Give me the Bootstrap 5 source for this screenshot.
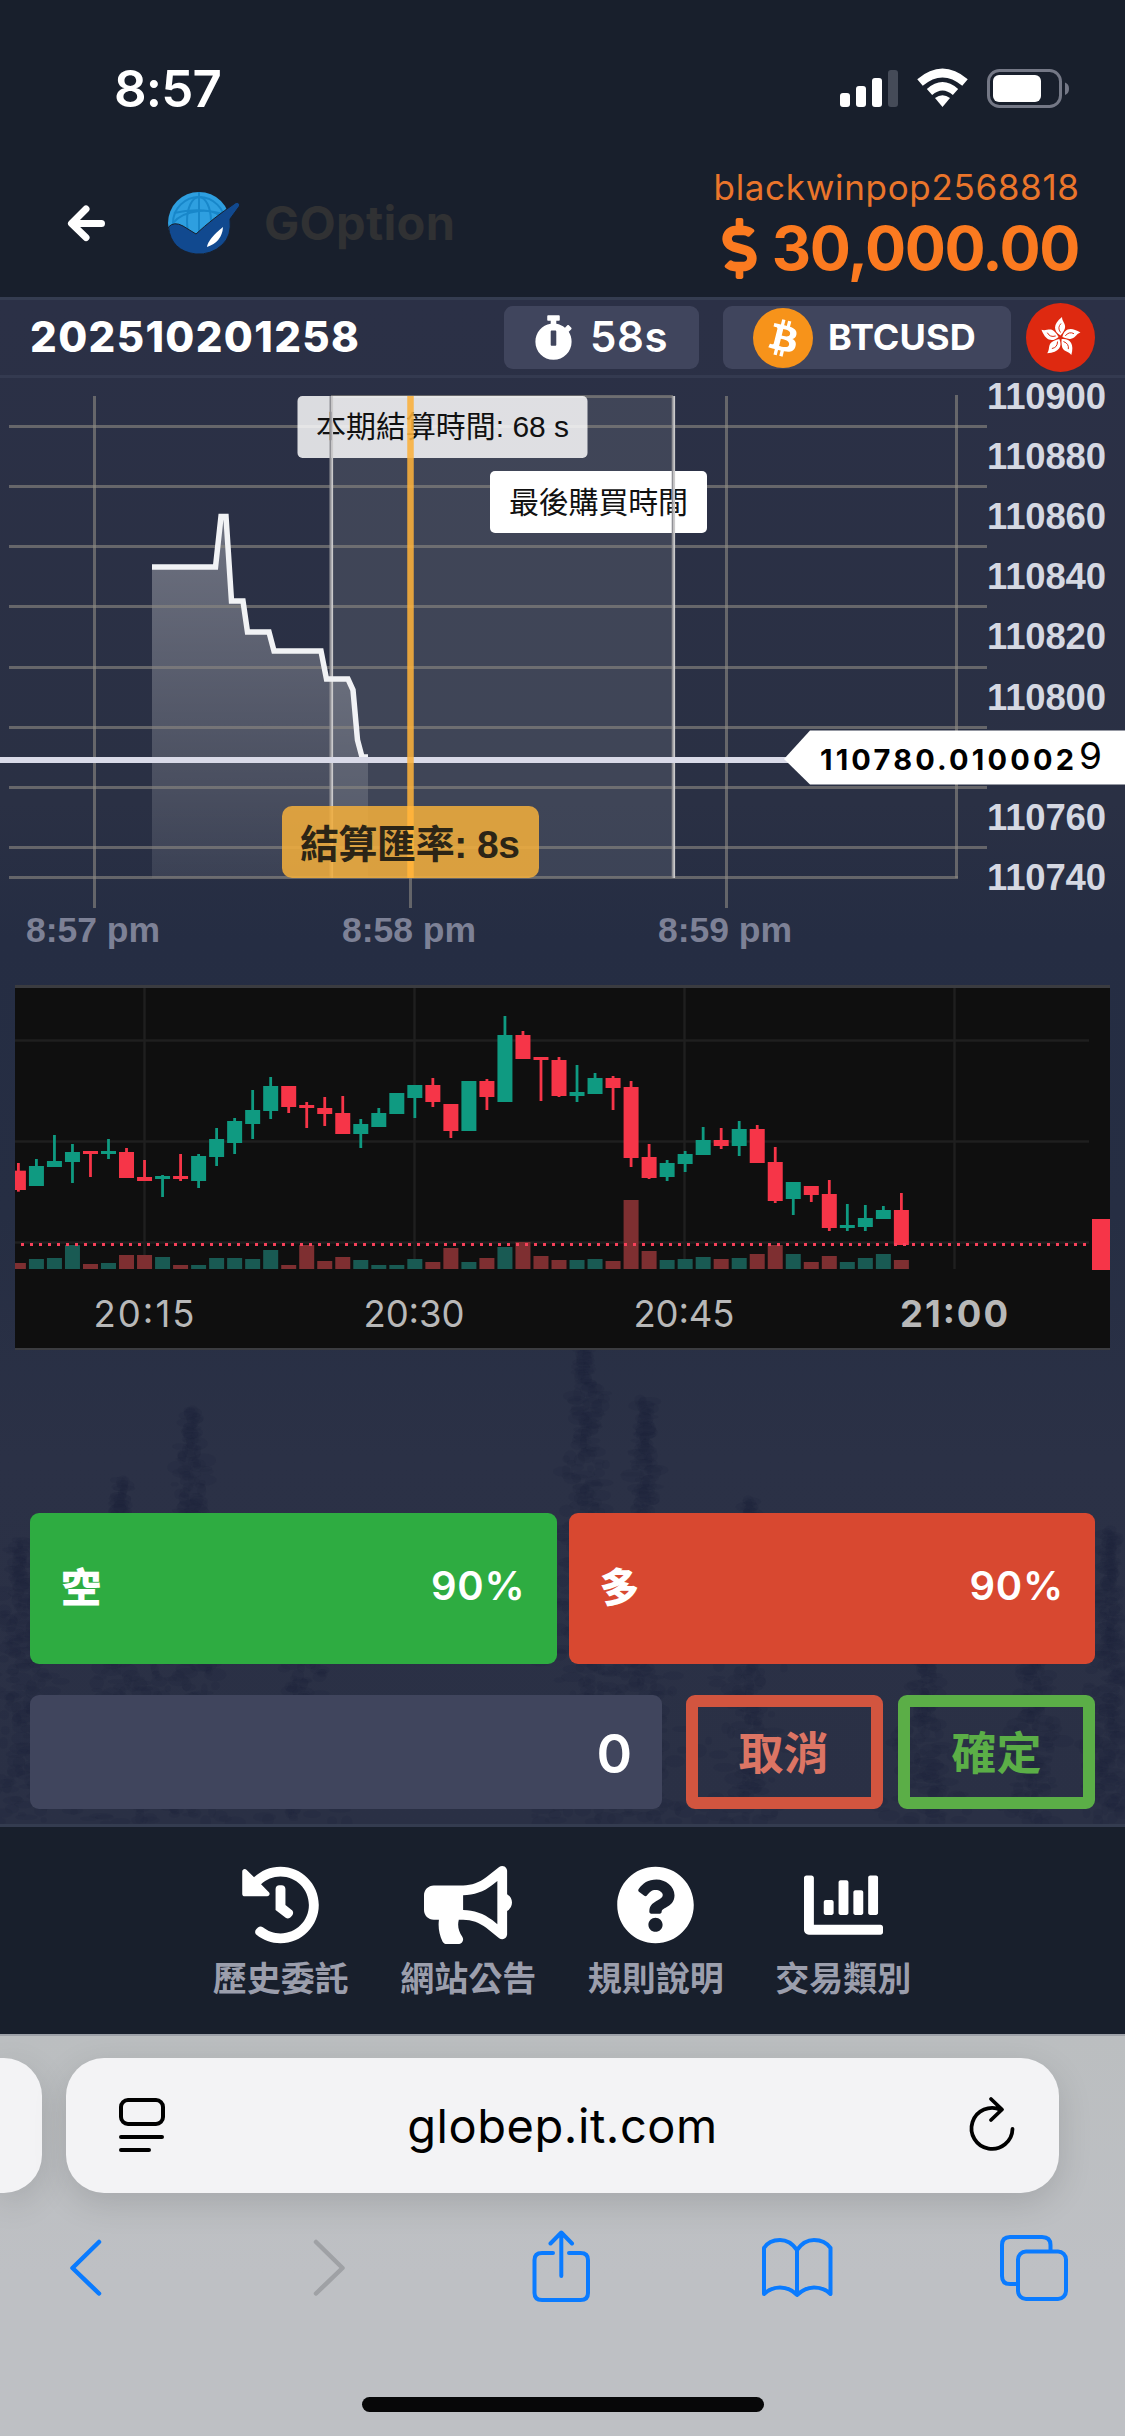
<!DOCTYPE html>
<html lang="zh-Hant">
<head>
<meta charset="utf-8">
<meta name="viewport" content="width=device-width, initial-scale=1">
<title>GOption</title>
<link href="https://cdn.jsdelivr.net/npm/bootstrap@5.3.0/dist/css/bootstrap.min.css" rel="stylesheet">
<style>
  :root { --ink:#181f2c; --slate:#2b3145; --chip:#40455d; --rule:#343c50; --brand:#fb7a20; --ios:#bec0c4; --blue:#0a7bff; }
  body { width:1125px; height:2436px; background:var(--ink); color:#fff; overflow:hidden;
         font-family:Inter,"Noto Sans CJK TC",sans-serif; line-height:1; }
  svg { display:block; flex:none; overflow:visible; }
  .status-bar { height:142px; padding:0 56px 0 114px; }
  .clock { font-size:51px; font-weight:600; letter-spacing:-.8px; margin-top:34px; }
  .status-icons { margin-top:36px; }
  .site-head { height:155px; padding:0 46px 0 67px; }
  .brand-row { padding-top:6px; }
  .logo { margin-left:62px; }
  .brand-name { font-size:47px; font-weight:700; color:#303133; letter-spacing:.3px; margin-left:23px; }
  .user-name { font-size:35px; color:#ea752b; letter-spacing:.68px; margin-right:-.7px; }
  .balance { font-size:61px; font-weight:700; color:var(--brand); letter-spacing:-1.4px; gap:15px; margin-top:13px; }
  .stage { height:1530px; background:var(--slate); border-top:3px solid var(--rule); border-bottom:3px solid var(--rule); isolation:isolate; }
  .scenery { position:absolute; left:0; top:0; z-index:-1; overflow:hidden; }
  .round-bar { height:78px; padding:0 30px; border-bottom:3px solid #343a50; }
  .round-no { font-size:42px; font-weight:800; letter-spacing:1.35px; width:474px; padding-bottom:2px; }
  .chip { height:63px; border-radius:9px; background:var(--chip); font-weight:700; }
  .chip-time { width:195px; padding-left:30px; gap:17px; font-size:42px; font-weight:600; letter-spacing:.6px; margin-right:24px; }
  .chip-pair { width:288px; padding-left:30px; gap:15px; font-size:36px; letter-spacing:.1px; margin-right:15px; }
  .chip span { padding-bottom:2px; }
  .quote-panel { margin:0 15px; }
  .trade { padding:163px 30px 0; }
  .trade-gap { gap:12px; }
  .order-row { margin-top:31px; }
  .side { height:151px; border:0; border-radius:9px; padding:0 31px 5px; font-size:40px; font-weight:600; letter-spacing:.8px; color:#fff; }
  .side .zh { font-weight:800; padding-top:3px; letter-spacing:0; }
  .side-short { background:#2eac41; } .side-long { background:#d84830; }
  .amount { width:632px; height:114px; border-radius:9px; background:var(--chip); font-size:54px; font-weight:600; padding:3px 30px 0; }
  .act { width:197px; height:114px; border:12px solid; border-radius:9px; font-size:45px; font-weight:700; padding:3px 0 0; color:#dc7564; border-color:#d2553f; margin-left:15px; }
  .act-cancel { margin-left:24px; padding-right:2px; }
  .act-ok { color:#5bae47; border-color:#5bae47; }
  .foot-nav { height:207px; padding:37px 187px 0; }
  .foot-nav a { width:187.5px; color:#9b9eac; font-size:34px; font-weight:700; text-decoration:none; }
  .foot-nav svg { height:82px; fill:#fff; margin-bottom:16px; }
  .browser { height:402px; background:linear-gradient(#bbbec0,var(--ios) 60%); border-top:2px solid #9da1a8; color:#000; }
  .addr-row { height:157px; padding-top:22px; }
  .addr { width:993px; height:135px; border-radius:38px; background:#f3f3f5; box-shadow:0 10px 34px rgba(0,0,0,.13); padding:0 44px 0 53px; font-size:47px; letter-spacing:.55px; }
  .addr span { margin-right:9px; }
  .prev-tab { width:42px; height:135px; border-radius:0 38px 38px 0; background:#f3f3f5; box-shadow:0 10px 34px rgba(0,0,0,.13); margin-right:24px; }
  .tools { height:152px; padding:0 57px 4px 69px; }
  .home-bar { width:402px; height:15px; border-radius:8px; background:#070708; margin-top:52px; }
</style>
</head>
<body>

<header class="status-bar d-flex justify-content-between align-items-center">
  <div class="clock">8:57</div>
  <svg class="status-icons" width="229" height="40" viewBox="840 69 229 40">
    <g fill="#fff"><rect x="840" y="93" width="10" height="14" rx="3"/><rect x="856" y="86" width="10" height="21" rx="3"/><rect x="872" y="78" width="10" height="29" rx="3"/></g>
    <rect x="888" y="70" width="10" height="37" rx="3" fill="#454b58"/>
    <g fill="none" stroke="#fff"><path d="M920 82.5Q942.500 63.500 965 82.500" stroke-width="8.500"/><path d="M929.500 92Q942.500 80.500 955.500 92" stroke-width="8"/></g>
    <path d="M935 98Q942.500 92.500 950 98L942.500 107Z" fill="#fff"/>
    <rect x="988.500" y="70.500" width="72" height="36" rx="11" fill="none" stroke="#747886" stroke-width="3"/>
    <rect x="993" y="75" width="48" height="27" rx="6" fill="#fff"/>
    <path d="M1065 82.500Q1069 84 1069 88.700T1065 95Z" fill="#747886"/>
  </svg>
</header>

<nav class="site-head d-flex justify-content-between">
  <div class="brand-row d-flex align-items-center">
    <svg width="38" height="38" viewBox="67 204 38 38" fill="none" stroke="#fff" stroke-width="7" stroke-linecap="round" stroke-linejoin="round"><path d="M86 209L71.500 223.500L86 237.500M73 223.500H101.500"/></svg>
    <svg class="logo" width="74" height="64" viewBox="167 192 74 64">
      <circle cx="199" cy="224" r="31" fill="#2e9fe0"/>
      <g fill="none" stroke="#1887ca" stroke-width="2"><circle cx="199" cy="224" r="26"/><ellipse cx="199" cy="222" rx="12" ry="24"/><path d="M174 214Q199 208 223 215M199 193V238M173 224Q181 214 199 212T225 222"/></g>
      <path d="M168.500 228Q174 222 183 227L196 235Q212 220 236 203.500Q240 203 239.500 207L230 220Q232 237 222 246Q211 256 196 255Q171 252 168.500 228Z" fill="#11498f" stroke="#181f2c" stroke-width="1"/>
      <path d="M207 248Q208 240 223 228Q222 243 207 248Z" fill="#fff"/>
    </svg>
    <span class="brand-name">GOption</span>
  </div>
  <div class="d-flex flex-column align-items-end pt-4">
    <span class="user-name mt-1">blackwinpop2568818</span>
    <div class="balance d-flex align-items-center">
      <svg width="35" height="61" viewBox="0 0 288 512" fill="currentColor"><path d="M209.200 233.400l-108-31.600C88.700 198.200 80 186.500 80 173.500c0-16.300 13.200-29.500 29.500-29.500h66.300c12.200 0 24.200 3.700 34.200 10.500 6.100 4.100 14.300 3.100 19.500-2l34.800-34c7.100-6.900 6.100-18.400-1.800-24.500C238 74.800 207.400 64.100 176 64V16c0-8.800-7.200-16-16-16h-32c-8.800 0-16 7.200-16 16v48h-2.500C45.800 64-5.400 118.700.5 183.600c4.200 46.100 39.400 83.600 83.800 96.600l102.500 30c12.500 3.700 21.200 15.300 21.200 28.300 0 16.300-13.200 29.500-29.500 29.500h-66.300C100 368 88 364.300 78 357.500c-6.100-4.100-14.300-3.100-19.500 2l-34.800 34c-7.100 6.900-6.100 18.400 1.800 24.500 24.500 19.200 55.100 29.900 86.500 30v48c0 8.800 7.200 16 16 16h32c8.800 0 16-7.200 16-16v-48.200c46.600-.9 90.300-28.600 105.700-72.700 21.500-61.600-14.600-124.800-72.500-141.700z"/></svg>
      <span>30,000.00</span>
    </div>
  </div>
</nav>

<main class="stage position-relative">
  <svg class="scenery" width="1125" height="1524" viewBox="0 300 1125 1524">
    <defs><linearGradient id="sky" x2="0" y2="1"><stop offset="0" stop-color="#2b3046"/><stop offset=".33" stop-color="#2a3044"/><stop offset=".42" stop-color="#252d43"/><stop offset=".6" stop-color="#262e43"/><stop offset=".76" stop-color="#2b3146"/><stop offset="1" stop-color="#2a3045"/></linearGradient></defs>
    <rect y="300" width="1125" height="1524" fill="url(#sky)"/>
    <g id="trees" fill="#20263c"></g>
  </svg>

  <section class="round-bar d-flex align-items-center">
    <div class="round-no">202510201258</div>
    <div class="chip chip-time d-flex align-items-center">
      <svg width="39" height="45" viewBox="0 0 448 512" fill="#fff"><path d="M432 304c0 114.900-93.100 208-208 208S16 418.900 16 304c0-104 76.300-190.200 176-205.500V64h-28c-6.600 0-12-5.400-12-12V12c0-6.600 5.400-12 12-12h120c6.600 0 12 5.400 12 12v40c0 6.600-5.400 12-12 12h-28v34.500c37.500 5.800 71.700 21.600 99.700 44.600l27.500-27.500c4.700-4.700 12.300-4.700 17 0l28.300 28.300c4.700 4.700 4.700 12.300 0 17l-29.400 29.400-.6.6C419.700 223.300 432 262.200 432 304zm-176 36V188.500c0-6.600-5.400-12-12-12h-40c-6.600 0-12 5.400-12 12V340c0 6.600 5.400 12 12 12h40c6.600 0 12-5.400 12-12z"/></svg>
      <span>58s</span>
    </div>
    <div class="chip chip-pair d-flex align-items-center">
      <svg width="60" height="60" viewBox="0 0 32 32"><circle cx="16" cy="16" r="16" fill="#f7931a"/><path fill="#fff" d="M23.189 14.020c.314-2.096-1.283-3.223-3.465-3.975l.708-2.840-1.728-.430-.690 2.765c-.454-.114-.920-.220-1.385-.326l.695-2.783L15.596 6l-.708 2.839c-.376-.086-.746-.170-1.104-.260l.002-.009-2.384-.595-.460 1.846s1.283.294 1.256.312c.700.175.826.638.805 1.006l-.806 3.235c.048.012.110.030.180.057l-.183-.045-1.130 4.532c-.086.212-.303.531-.793.410.018.025-1.256-.313-1.256-.313l-.858 1.978 2.250.561c.418.105.828.215 1.231.318l-.715 2.872 1.727.430.708-2.840c.472.127.930.245 1.378.357l-.706 2.828 1.728.430.715-2.866c2.948.558 5.164.333 6.097-2.333.752-2.146-.037-3.385-1.588-4.192 1.130-.260 1.980-1.003 2.207-2.538zm-3.950 5.538c-.533 2.147-4.148.986-5.320.695l.950-3.805c1.172.293 4.929.872 4.370 3.110zm.535-5.569c-.487 1.953-3.495.960-4.470.717l.860-3.450c.975.243 4.118.696 3.610 2.733z"/></svg>
      <span>BTCUSD</span>
    </div>
    <svg width="69" height="69" viewBox="-34.500 -34.500 69 69">
      <circle r="34.500" fill="#de2910"/>
      <defs><g id="petal"><path d="M0-2C-7-6-8-13 1.500-20.500C1.500-15 7-13 3.500-7Q2-4 0-2Z" fill="#fff"/><path d="M0-5Q-3.500-10 .5-14" fill="none" stroke="#de2910" stroke-width=".9"/></g></defs>
      <use href="#petal"/><use href="#petal" transform="rotate(72)"/><use href="#petal" transform="rotate(144)"/><use href="#petal" transform="rotate(216)"/><use href="#petal" transform="rotate(288)"/>
    </svg>
  </section>

  <section>
    <svg width="1125" height="607" viewBox="0 378 1125 607">
      <defs><linearGradient id="area" x2="0" y2="1"><stop offset="0" stop-color="#fff" stop-opacity=".32"/><stop offset="1" stop-color="#fff" stop-opacity=".09"/></linearGradient></defs>
      <rect x="331" y="396" width="342" height="482" fill="#fff" fill-opacity=".1"/>
      <path d="M152 567H215.500L221 516.500H226L231.500 601H243L247.500 632H269L274 651H321L326.500 679H348L353 690L357.500 740L362 757H368V878H152Z" fill="url(#area)"/>
      <g stroke="#8a8781" stroke-opacity=".62" stroke-width="3" fill="none">
        <path d="M9 426.500H987M9 486.500H987M9 546.500H987M9 606.500H987M9 667.500H987M9 727.500H987M9 787.500H987M9 847.500H987M9 877.500H958M331 396.500H673"/>
        <path d="M94.500 396V908M410.500 878V908M726.500 396V908M956.500 395V878"/>
      </g>
      <rect x="490" y="471" width="217" height="62" rx="5" fill="#fff"/>
      <text x="509" y="513" font-size="30" textLength="179" fill="#111">最後購買時間</text>
      <rect x="297.500" y="396" width="290" height="62" rx="5" fill="#fff" fill-opacity=".83"/>
      <text x="316" y="437" font-size="30" textLength="253" fill="#111" font-family="'Liberation Sans','Noto Sans CJK TC',sans-serif">本期結算時間: 68 s</text>
      <path d="M330.500 396V878M672.700 396V878" stroke="#909095" stroke-width="2"/>
      <path d="M332.200 396V878M674.200 396V878" stroke="#cbcacb" stroke-width="1.800"/>
      <path d="M152 567H215.500L221 516.500H226L231.500 601H243L247.500 632H269L274 651H321L326.500 679H348L353 690L357.500 740L362 757H368" fill="none" stroke="#f1f2f5" stroke-width="5.500"/>
      <path d="M0 760H800" stroke="#d9dae8" stroke-width="6"/>
      <path d="M410.500 396V878" stroke="#fbb03b" stroke-opacity=".88" stroke-width="6.500"/>
      <rect x="282" y="806" width="257" height="72" rx="10" fill="#f1ae3c" fill-opacity=".87"/>
      <path d="M410.500 806V878" stroke="#feb23b" stroke-width="6"/>
      <text x="300" y="858" font-size="39" font-weight="700" textLength="220" fill="#2c2516" font-family="'Liberation Sans','Noto Sans CJK TC',sans-serif">結算匯率: 8s</text>
      <g fill="#d5d8e2" font-family="'Liberation Sans',sans-serif" font-size="36.500" font-weight="700">
        <text x="987" y="408.500" textLength="119">110900</text><text x="987" y="469" textLength="119">110880</text><text x="987" y="529" textLength="119">110860</text><text x="987" y="589" textLength="119">110840</text><text x="987" y="649" textLength="119">110820</text><text x="987" y="710" textLength="119">110800</text><text x="987" y="830" textLength="119">110760</text><text x="987" y="890" textLength="119">110740</text>
      </g>
      <g fill="#7d8196" font-family="'Liberation Sans',sans-serif" font-size="35.500" font-weight="700">
        <text x="26" y="942" textLength="134">8:57 pm</text><text x="342" y="942" textLength="134">8:58 pm</text><text x="658" y="942" textLength="134">8:59 pm</text>
      </g>
      <path d="M784 759L810 730.500H1125V784.500H810Z" fill="#fff"/>
      <text x="820" y="769.500" font-size="29" font-weight="700" fill="#000" textLength="254">110780.010002</text>
      <text x="1079" y="769" font-size="37" fill="#000">9</text>
    </svg>
  </section>

  <section class="quote-panel">
    <svg width="1095" height="365" viewBox="15 985 1095 365">
      <defs><clipPath id="plot"><rect x="15" y="985" width="1095" height="365"/></clipPath></defs>
      <rect x="15" y="985" width="1095" height="365" fill="#0f0f0f"/>
      <path d="M15 986.500H1110" stroke="#3b3c40" stroke-width="3"/><path d="M15 1349H1110" stroke="#3b3c40" stroke-width="2"/>
      <path d="M144.500 988V1269M414.500 988V1269M684.500 988V1269M954.500 988V1269M15 1040.500H1089M15 1141.500H1089M15 1242.500H1089" stroke="#1f1f1f" stroke-width="2.500"/>
      <g id="candles" clip-path="url(#plot)"></g>
      <path d="M21 1244.500H1089" stroke="#f7415a" stroke-width="3" stroke-dasharray="3 6"/>
      <rect x="1092" y="1219" width="18" height="51" fill="#f63548"/>
      <g fill="#b8b8b8" font-size="36.500" text-anchor="middle">
        <text x="144" y="1327" textLength="101">20:15</text><text x="414" y="1327" textLength="101">20:30</text><text x="684" y="1327" textLength="101">20:45</text><text x="954" y="1327" textLength="108" font-weight="700">21:00</text>
      </g>
    </svg>
  </section>

  <section class="trade">
    <div class="trade-gap d-flex">
      <button class="side side-short flex-fill d-flex justify-content-between align-items-center"><span class="zh">空</span><span>90%</span></button>
      <button class="side side-long flex-fill d-flex justify-content-between align-items-center"><span class="zh">多</span><span>90%</span></button>
    </div>
    <div class="order-row d-flex">
      <div class="amount d-flex align-items-center justify-content-end">0</div>
      <button class="act act-cancel bg-transparent">取消</button>
      <button class="act act-ok bg-transparent">確定</button>
    </div>
  </section>
</main>

<nav class="foot-nav d-flex">
  <a class="d-flex flex-column align-items-center" href="#"><svg width="79" viewBox="0 0 512 512"><path d="M504 255.531c.253 136.640-111.180 248.372-247.820 248.468-59.015.042-113.223-20.530-155.822-54.911-11.077-8.940-11.905-25.541-1.839-35.607l11.267-11.267c8.609-8.609 22.353-9.551 31.891-1.984C173.062 425.135 212.781 440 256 440c101.705 0 184-82.311 184-184 0-101.705-82.311-184-184-184-48.814 0-93.149 18.969-126.068 49.932l50.754 50.754c10.080 10.080 2.941 27.314-11.313 27.314H24c-8.837 0-16-7.163-16-16V38.627c0-14.254 17.234-21.393 27.314-11.314l49.372 49.372C129.209 34.136 189.552 8 256 8c136.810 0 247.747 110.780 248 247.531zm-180.912 78.784l9.823-12.630c8.138-10.463 6.253-25.542-4.210-33.679L288 256.349V152c0-13.255-10.745-24-24-24h-16c-13.255 0-24 10.745-24 24v135.651l65.409 50.874c10.463 8.137 25.541 6.253 33.679-4.210z"/></svg>歷史委託</a>
  <a class="d-flex flex-column align-items-center" href="#"><svg width="88" viewBox="0 0 576 512"><path d="M576 240c0-23.630-12.950-44.040-32-55.120V32.010C544 23.260 537.020 0 512 0c-7.120 0-14.190 2.380-19.980 7.020l-85.030 68.030C364.280 109.190 310.660 128 256 128H64c-35.350 0-64 28.650-64 64v96c0 35.350 28.650 64 64 64h33.700c-1.390 10.480-2.180 21.140-2.180 32 0 39.770 9.260 77.350 25.560 110.940 5.190 10.690 16.520 17.060 28.400 17.060h74.280c26.050 0 41.690-29.840 25.900-50.560-16.400-21.520-26.150-48.360-26.150-77.440 0-11.110 1.620-21.790 4.410-32H256c54.660 0 108.280 18.810 150.980 52.950l85.030 68.030a32.023 32.023 0 0 0 19.980 7.020c24.920 0 32-22.780 32-32V295.130C563.050 284.040 576 263.630 576 240zm-96 141.420l-33.050-26.440C392.950 311.780 325.120 288 256 288v-96c69.120 0 136.950-23.780 190.950-66.980L480 98.580v282.840z"/></svg>網站公告</a>
  <a class="d-flex flex-column align-items-center" href="#"><svg width="79" viewBox="0 0 512 512"><path d="M504 256c0 136.997-111.043 248-248 248S8 392.997 8 256C8 119.083 119.043 8 256 8s248 111.083 248 248zM262.655 90c-54.497 0-89.255 22.957-116.549 63.758-3.536 5.286-2.353 12.415 2.715 16.258l34.699 26.310c5.205 3.947 12.621 3.008 16.665-2.122 17.864-22.658 30.113-35.797 57.303-35.797 20.429 0 45.698 13.148 45.698 32.958 0 14.976-12.363 22.667-32.534 33.976C247.128 238.528 216 254.941 216 296v4c0 6.627 5.373 12 12 12h56c6.627 0 12-5.373 12-12v-1.333c0-28.462 83.186-29.647 83.186-106.667 0-58.002-60.165-102-116.531-102zM256 338c-25.365 0-46 20.635-46 46 0 25.364 20.635 46 46 46s46-20.636 46-46c0-25.365-20.635-46-46-46z"/></svg>規則說明</a>
  <a class="d-flex flex-column align-items-center" href="#"><svg width="79" viewBox="0 0 512 512"><path d="M332.800 320h38.400c6.400 0 12.800-6.400 12.800-12.800V172.800c0-6.400-6.400-12.800-12.800-12.800h-38.400c-6.400 0-12.800 6.400-12.800 12.800v134.400c0 6.400 6.400 12.800 12.800 12.800zm96 0h38.400c6.400 0 12.800-6.400 12.800-12.800V76.800c0-6.400-6.400-12.800-12.800-12.800h-38.400c-6.400 0-12.800 6.400-12.800 12.800v230.400c0 6.400 6.400 12.800 12.800 12.800zm-288 0h38.400c6.400 0 12.800-6.400 12.800-12.800v-70.400c0-6.400-6.400-12.800-12.800-12.800h-38.400c-6.400 0-12.800 6.400-12.800 12.800v70.400c0 6.400 6.400 12.800 12.800 12.800zm96 0h38.400c6.400 0 12.800-6.400 12.800-12.800V108.800c0-6.400-6.400-12.800-12.800-12.800h-38.400c-6.400 0-12.800 6.400-12.800 12.800v198.400c0 6.400 6.400 12.800 12.800 12.800zM496 384H64V80c0-8.840-7.160-16-16-16H16C7.160 64 0 71.160 0 80v336c0 17.670 14.330 32 32 32h464c8.840 0 16-7.160 16-16v-32c0-8.840-7.160-16-16-16z"/></svg>交易類別</a>
</nav>

<footer class="browser">
  <div class="addr-row d-flex">
    <div class="prev-tab"></div>
    <div class="addr d-flex align-items-center justify-content-between">
      <svg width="46" height="55" viewBox="119 2099 46 55" fill="none" stroke="#000" stroke-width="4" stroke-linecap="round"><rect x="121" y="2101" width="42" height="24" rx="7"/><path d="M121 2138H162M121 2151H149"/></svg>
      <span>globep.it.com</span>
      <svg width="46" height="56" viewBox="970 2097 46 56" fill="none" stroke="#000" stroke-width="3.800" stroke-linecap="round" stroke-linejoin="round"><path d="M1013.500 2128A20.500 20.500 0 1 1 1002 2109M992 2098L1003 2108.500L992 2119"/></svg>
    </div>
  </div>
  <div class="tools d-flex align-items-center justify-content-between">
    <svg width="999" height="75" viewBox="70 2230 999 75" fill="none" stroke="#0a7bff" stroke-width="4" stroke-linecap="round" stroke-linejoin="round">
      <path d="M100 2242L73.500 2268L100 2293.500" stroke-width="4.500"/>
      <path d="M317 2242L343.500 2268L317 2293.500" stroke="#9fa1a5" stroke-width="4.500"/>
      <path d="M554 2253H543Q535.500 2253 535.500 2260V2293Q535.500 2300 543 2300H581.500Q589 2300 589 2293V2260Q589 2253 581.500 2253H570M562.300 2276V2233M551.500 2243.500L562.300 2232.500L573 2243.500"/>
      <path d="M798 2250Q791 2240 781 2240Q770 2240 765 2248V2294Q772 2287.500 781 2287.500Q791 2287.500 798 2295Q806 2287.500 815 2287.500Q825 2287.500 831.500 2294V2248Q826 2240 815 2240Q805 2240 798 2250V2294"/>
      <rect x="1019" y="2251.500" width="48" height="47.500" rx="8"/>
      <path d="M1017 2284H1011Q1003 2284 1003 2276V2245Q1003 2237 1011 2237H1043Q1051.500 2237 1051.500 2245V2250"/>
    </svg>
  </div>
  <div class="home-bar mx-auto"></div>
</footer>

<script src="https://cdn.jsdelivr.net/npm/bootstrap@5.3.0/dist/js/bootstrap.bundle.min.js"></script>
<script>
  // One-minute candles: direction, high, body top, body bottom, low, volume top (third-pixel units from y = 970)
  const bars = `r579,602,660,665,879 g567,588,648,648,867 g495,573,591,591,864 g522,546,576,639,825 r543,543,552,621,882
  g507,543,552,567,879 r534,546,624,624,855 r570,621,633,633,855 g615,618,627,681,861 r552,618,627,633,885
  g552,558,633,654,885 g474,507,561,588,864 g444,453,519,552,864 g360,420,462,507,867 g321,348,423,447,840
  r348,348,411,429,885 r396,405,414,474,825 r381,414,432,468,873 r378,429,492,492,861 g447,462,492,534,870
  g414,429,471,471,885 g369,369,432,432,885 g345,345,384,444,867 r324,345,396,411,876 r402,402,483,504,834
  g333,333,483,483,876 r327,333,381,420,864 g138,195,396,396,831 r183,195,267,267,816 r261,261,270,393,858
  r261,270,378,381,870 g285,366,378,396,870 g309,324,372,372,867 r318,324,354,420,873 r333,351,564,591,690
  r522,561,624,627,843 g570,579,621,633,870 g543,552,582,606,867 g471,510,555,555,861 r474,510,528,537,867
  g453,477,528,558,864 r465,477,579,579,852 r531,576,693,699,825 g636,636,687,735,852 r648,648,675,696,876
  r630,672,774,783,858 g702,765,774,783,876 g705,744,771,783,864 g708,720,747,747,852 r669,720,825,825,870`.trim().split(/\s+/);
  document.getElementById('candles').innerHTML = bars.map((b, i) => {
    const up = b[0] === 'g', [h, t, m, l, v] = b.slice(1).split(',').map(n => 970 + n / 3);
    const x = 18.4 + 18.02 * i, c = up ? '#0f9a81' : '#f63548';
    return `<rect x="${x - 7.5}" y="${v}" width="15" height="${1269 - v}" fill="${up ? '#195a53' : '#7e2f31'}"/>` +
      `<path d="M${x} ${h}V${l}" stroke="${c}" stroke-width="2.8"/><rect x="${x - 7.5}" y="${t}" width="15" height="${m - t}" fill="${c}"/>`;
  }).join('');

  // Faint conifers behind the trading form: [trunk x, top y, foot y, half width]
  let seed = 7; const rnd = () => (seed = seed * 16807 % 2147483647) / 2147483647;
  let leaves = '';
  for (const [cx, top, foot, w] of [[190,1410,1824,70],[120,1480,1824,60],[585,1340,1824,75],[645,1400,1824,60],[20,1540,1824,70],[300,1600,1824,60],[750,1500,1824,60],[925,1660,1824,60],[1035,1660,1824,60],[1110,1530,1824,40]])
    for (let y = top; y < foot; y += 1.4) {
      const s = w * (0.12 + 0.88 * (y - top) / (foot - top)) * (0.7 + 0.3 * Math.sin(y / 11));
      const x = cx + (rnd() + rnd() - 1) * 1.3 * s;
      leaves += `<ellipse cx="${x.toFixed(1)}" cy="${y.toFixed(1)}" rx="${(3 + rnd() * 9).toFixed(1)}" ry="${(2 + rnd() * 5).toFixed(1)}" opacity=".17"/>`;
    }
  document.getElementById('trees').innerHTML = leaves;
</script>
</body>
</html>
